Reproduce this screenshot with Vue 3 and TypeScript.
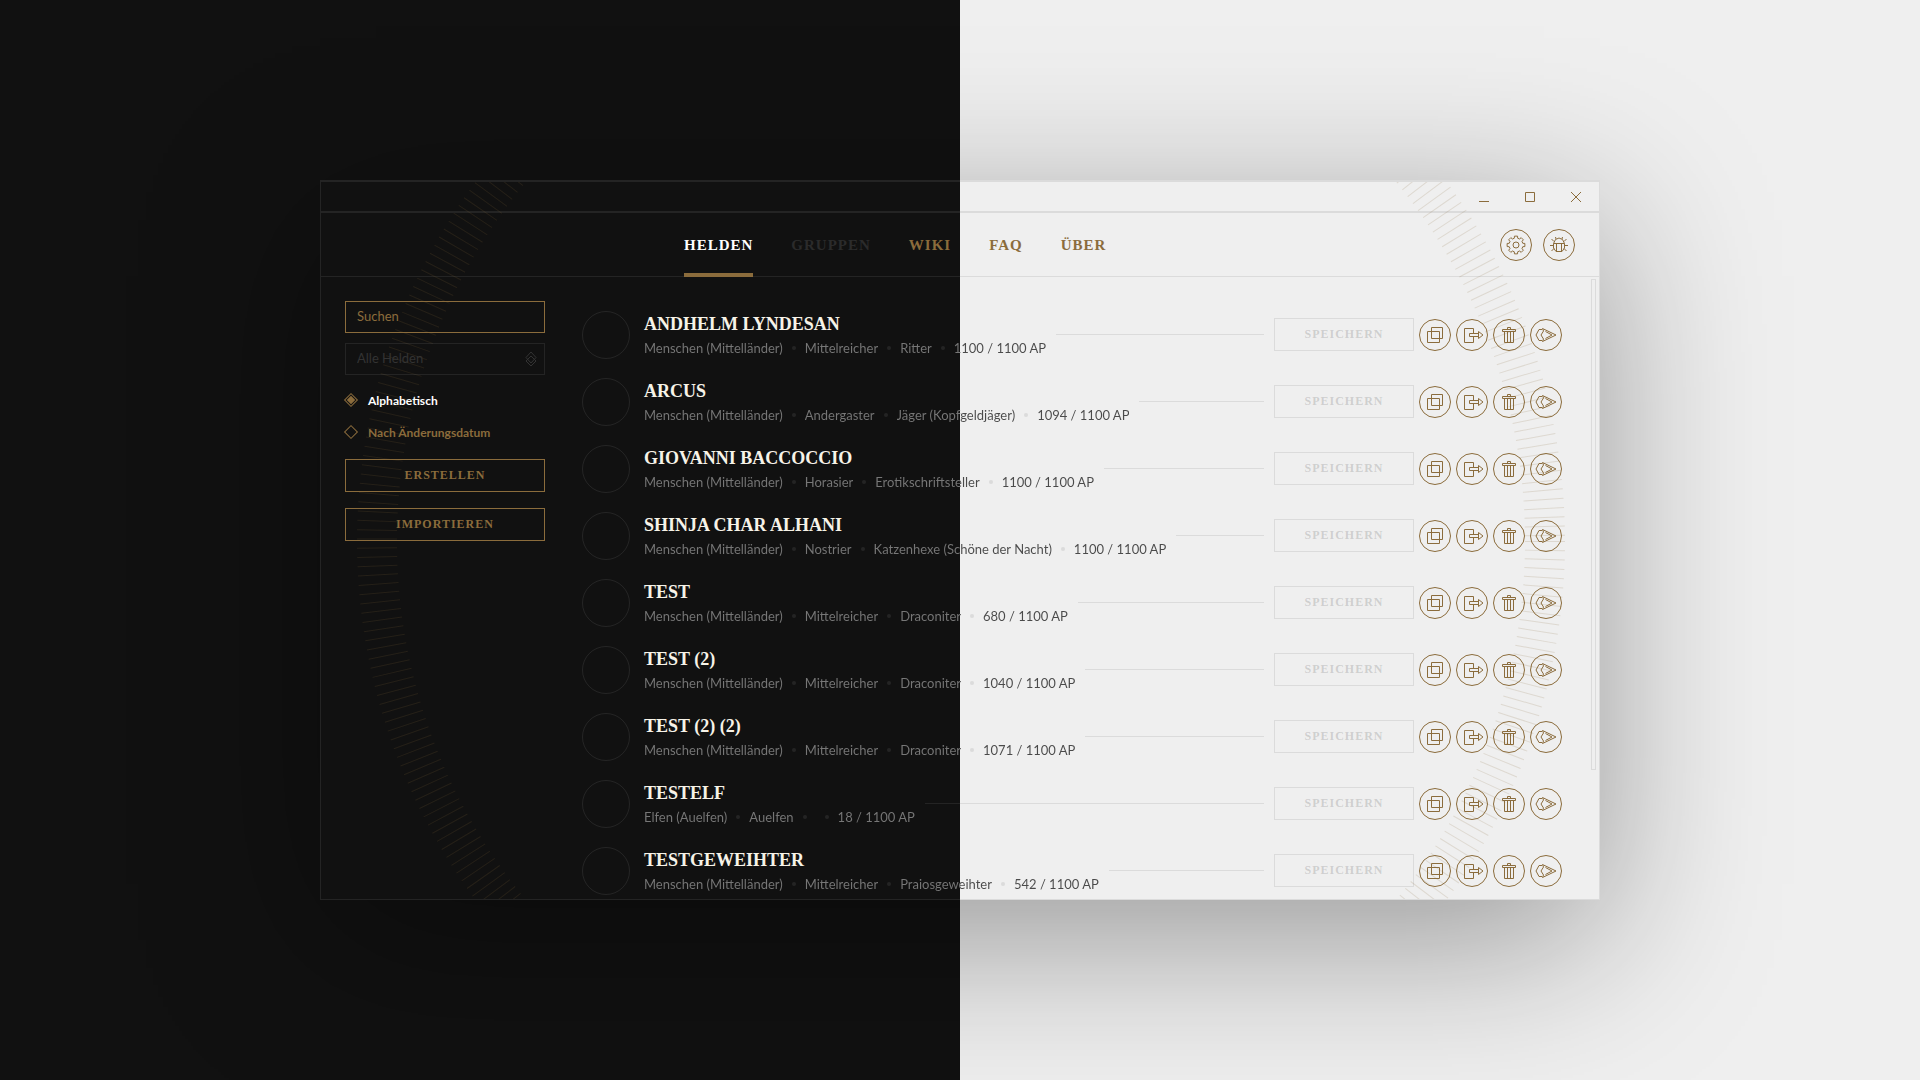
<script setup lang="ts">
import { computed, ref } from 'vue'

interface Hero {
  name: string
  race: string
  culture: string
  profession: string
  spent: number
}

const heroes: Hero[] = [
  { name: 'Andhelm Lyndesan', race: 'Menschen (Mittelländer)', culture: 'Mittelreicher', profession: 'Ritter', spent: 1100 },
  { name: 'Arcus', race: 'Menschen (Mittelländer)', culture: 'Andergaster', profession: 'Jäger (Kopfgeldjäger)', spent: 1094 },
  { name: 'Giovanni Baccoccio', race: 'Menschen (Mittelländer)', culture: 'Horasier', profession: 'Erotikschriftsteller', spent: 1100 },
  { name: 'Shinja char Alhani', race: 'Menschen (Mittelländer)', culture: 'Nostrier', profession: 'Katzenhexe (Schöne der Nacht)', spent: 1100 },
  { name: 'Test', race: 'Menschen (Mittelländer)', culture: 'Mittelreicher', profession: 'Draconiter', spent: 680 },
  { name: 'Test (2)', race: 'Menschen (Mittelländer)', culture: 'Mittelreicher', profession: 'Draconiter', spent: 1040 },
  { name: 'Test (2) (2)', race: 'Menschen (Mittelländer)', culture: 'Mittelreicher', profession: 'Draconiter', spent: 1071 },
  { name: 'Testelf', race: 'Elfen (Auelfen)', culture: 'Auelfen', profession: '', spent: 18 },
  { name: 'Testgeweihter', race: 'Menschen (Mittelländer)', culture: 'Mittelreicher', profession: 'Praiosgeweihter', spent: 542 },
]

const tabs = [
  { label: 'Helden', state: 'active' },
  { label: 'Gruppen', state: 'disabled' },
  { label: 'Wiki', state: '' },
  { label: 'FAQ', state: '' },
  { label: 'Über', state: '' },
]

const actions = [
  { label: 'Duplizieren', path: 'M8.5 12.5H20.5V23.5H8.5ZM12.5 8.5H23.5V19.5H12.5Z' },
  { label: 'Exportieren', path: 'M17.5 14.5V9.5H8.5V23.5H17.5V17.5M13.5 14.5H22.5V17.5H13.5ZM22.5 12.5L27 16L22.5 19.5Z' },
  { label: 'Löschen', path: 'M9.5 10.5H22.5V12.5H9.5ZM14.5 10.5V8.5H17.5V10.5M11.5 12.5V23.5H20.5V12.5M14.5 12.5V23.5M17.5 12.5V23.5' },
  { label: 'Öffnen', path: 'M12 10.5H9L6 16L9 21.5H12M12.5 9.5L26 16L12.5 22.5L13.5 20L11 16L13.5 12ZM15.5 12.500L22 16L15.500 19.500' },
]

const order = ref('name')
const query = ref('')

// Cog outline: eight blunt teeth around the centre of a 32px button
const cog = computed(() => {
  const points: string[] = []
  for (let i = 0; i < 8; i++) {
    const steps: [number, number][] = [[7, -14], [9, -10], [9, 10], [7, 14]]
    for (const [radius, offset] of steps) {
      const a = ((i * 45 + offset) * Math.PI) / 180
      points.push(`${(16 + radius * Math.cos(a)).toFixed(2)},${(16 + radius * Math.sin(a)).toFixed(2)}`)
    }
  }
  return points.join(' ')
})
</script>

<template>
  <div class="stage">
    <div class="window">
      <svg class="rays" width="1280" height="720" viewBox="0 0 1280 720" aria-hidden="true">
        <circle cx="641" cy="360" r="584" />
      </svg>

      <div class="titlebar">
        <button type="button" aria-label="Minimieren">
          <svg width="12" height="12"><path d="M1 10.5H11" /></svg>
        </button>
        <button type="button" aria-label="Maximieren">
          <svg width="12" height="12"><path d="M1.5 1.5H10.5V10.5H1.5Z" /></svg>
        </button>
        <button type="button" aria-label="Schließen">
          <svg width="12" height="12"><path d="M1 1L11 11M11 1L1 11" /></svg>
        </button>
      </div>

      <header class="header">
        <nav class="tabs">
          <a v-for="tab in tabs" :key="tab.label" href="#" :class="['tab', tab.state]">{{ tab.label }}</a>
        </nav>
        <div class="tools">
          <button type="button" class="round" aria-label="Einstellungen">
            <svg width="32" height="32"><polygon :points="cog" /><circle cx="16" cy="16" r="3" /></svg>
          </button>
          <button type="button" class="round" aria-label="Fehler melden">
            <svg width="32" height="32">
              <path d="M10.5 14.5H21.5V19L19 22.5H13L10.5 19ZM10.500 14.500L12.500 10.500L16 9L19.500 10.500L21.500 14.500M13.5 14.5V22.500M18.5 14.5V22.500M11 12.500L8.500 10M21 12.500L23.500 10M10.500 16.500H7M21.500 16.500H25M11 19.500L8.500 22M21 19.500L23.500 22M13 10L12.500 8M19 10L19.500 8" />
            </svg>
          </button>
        </div>
      </header>

      <div class="body">
        <aside class="sidebar">
          <input v-model="query" class="field" type="text" placeholder="Suchen" aria-label="Suchen" />
          <div class="dropdown">
            <select class="field" disabled aria-label="Heldenfilter">
              <option>Alle Helden</option>
            </select>
            <svg width="12" height="16"><path d="M6 1L11 6.500L6 12L1 6.500ZM6 5L11 10L6 15L1 10Z" /></svg>
          </div>
          <div class="orders">
            <label class="order"><input v-model="order" type="radio" name="order" value="name" /><span>Alphabetisch</span></label>
            <label class="order"><input v-model="order" type="radio" name="order" value="date" /><span>Nach Änderungsdatum</span></label>
          </div>
          <button type="button" class="push">Erstellen</button>
          <button type="button" class="push">Importieren</button>
        </aside>

        <main class="heroes">
          <article v-for="hero in heroes" :key="hero.name" class="hero">
            <div class="avatar"></div>
            <div class="info">
              <h2>{{ hero.name }}</h2>
              <p>
                <span>{{ hero.race }}</span><i></i><span>{{ hero.culture }}</span><i></i><span>{{ hero.profession }}</span><i></i><span>{{ hero.spent }} / 1100 AP</span>
              </p>
            </div>
            <div class="rule"></div>
            <button type="button" class="push save" disabled>Speichern</button>
            <div class="actions">
              <button v-for="action in actions" :key="action.label" type="button" class="round" :aria-label="action.label">
                <svg width="32" height="32"><path :d="action.path" /></svg>
              </button>
            </div>
          </article>
        </main>
        <div class="scrollbar"></div>
      </div>
    </div>
  </div>
</template>

<style>
body {
  margin: 0;
}
</style>

<style scoped>
.stage {
  --gold: #8b6c3c;
  --line: rgba(128, 128, 128, 0.18);
  --muted: rgba(128, 128, 128, 0.3);
  display: flex;
  align-items: center;
  justify-content: center;
  min-height: 100vh;
  overflow: hidden;
  background: linear-gradient(90deg, #111 50%, #efefef 50%);
  font-family: Lato, "Open Sans", sans-serif;
}

.stage *,
.stage *::before {
  box-sizing: border-box;
}

.window {
  position: relative;
  display: flex;
  flex-direction: column;
  width: calc(200% / 3);
  height: calc(200vh / 3);
  overflow: hidden;
  border: 1px solid var(--line);
  border-top-width: 2px;
  box-shadow: 0 40px 160px rgba(0, 0, 0, 0.37);
}

.rays {
  position: absolute;
  top: 50%;
  left: 50%;
  transform: translate(-50%, -50%);
  pointer-events: none;
}

.rays circle {
  fill: none;
  stroke: var(--gold);
  stroke-width: 40;
  stroke-dasharray: 1 8;
  opacity: 0.17;
}

button {
  padding: 0;
  border: 0;
  background: none;
  color: var(--gold);
}

svg {
  display: block;
  fill: none;
  stroke: currentColor;
}

.titlebar {
  display: flex;
  flex: none;
  justify-content: flex-end;
  height: 31px;
  border-bottom: 2px solid var(--line);
}

.titlebar button {
  display: grid;
  place-items: center;
  width: 46px;
}

.header {
  display: flex;
  flex: none;
  align-items: stretch;
  justify-content: space-between;
  height: 64px;
  padding: 0 24px 0 363px;
  border-bottom: 1px solid var(--line);
}

.tabs {
  display: flex;
  gap: 38px;
}

.tab {
  position: relative;
  color: var(--gold);
  font: bold 15px/64px "Liberation Serif", serif;
  letter-spacing: 1px;
  text-decoration: none;
  text-transform: uppercase;
}

.tab.active {
  color: #fff;
}

.tab.active::after {
  position: absolute;
  right: 0;
  bottom: -1px;
  left: 0;
  height: 4px;
  background: var(--gold);
  content: "";
}

.tab.disabled {
  color: #2b2b2b;
}

.tools {
  display: flex;
  align-items: center;
  gap: 11px;
}

.round {
  flex: none;
  width: 32px;
  height: 32px;
  border: 1px solid var(--gold);
  border-radius: 50%;
}

.round svg {
  margin: -1px;
}

.body {
  display: flex;
  flex: 1;
  min-height: 0;
}

.sidebar {
  display: flex;
  flex: none;
  flex-direction: column;
  width: 224px;
  padding: 24px 0 0 24px;
}

.field {
  display: block;
  width: 100%;
  height: 32px;
  padding: 0 11px 2px;
  border: 1px solid var(--gold);
  border-radius: 0;
  outline: 0;
  appearance: none;
  background: none;
  color: var(--gold);
  font: 13px Lato, sans-serif;
}

.field::placeholder {
  color: var(--gold);
  opacity: 1;
}

.field:disabled {
  border-color: var(--line);
  color: #333;
  opacity: 1;
}

.dropdown {
  position: relative;
  margin-top: 10px;
  color: #333;
}

.dropdown svg {
  position: absolute;
  top: 8px;
  right: 8px;
}

.orders {
  display: flex;
  flex-direction: column;
  margin: 9px 0 11px;
}

.order {
  display: flex;
  align-items: center;
  gap: 12px;
  height: 32px;
  padding-left: 1px;
  color: var(--gold);
  font-size: 12px;
  font-weight: bold;
}

.order input {
  display: grid;
  place-items: center;
  width: 10px;
  height: 10px;
  margin: 0;
  border: 1px solid var(--gold);
  appearance: none;
  transform: rotate(45deg);
}

.order input:checked::before {
  width: 6px;
  height: 6px;
  background: var(--gold);
  content: "";
}

.order:has(:checked) {
  color: #fff;
}

.push {
  height: 33px;
  border: 1px solid var(--gold);
  font: bold 12px "Liberation Serif", serif;
  letter-spacing: 1px;
  text-transform: uppercase;
}

.push + .push {
  margin-top: 16px;
}

.heroes {
  flex: 1;
  min-width: 0;
  padding: 24px 29px 0 37px;
  overflow: hidden;
}

.hero {
  display: flex;
  align-items: center;
  height: 67px;
}

.avatar {
  flex: none;
  width: 48px;
  height: 48px;
  margin-right: 14px;
  border: 1px solid var(--line);
  border-radius: 50%;
}

.info {
  padding-top: 2px;
}

h2 {
  margin: 0;
  color: #f7f3e8;
  font: bold 18px/24px "Liberation Serif", serif;
  text-transform: uppercase;
}

p {
  display: flex;
  align-items: center;
  margin: 0;
  font-size: 13px;
  line-height: 24px;
  white-space: nowrap;
}

/* The text colour flips where the backdrop does */
p span {
  background: linear-gradient(90deg, #777 50%, #4a4a4a 50%) fixed;
  background-clip: text;
  color: transparent;
}

p i {
  width: 4px;
  height: 4px;
  margin: 0 9px;
  border-radius: 50%;
  background: var(--line);
}

.rule {
  flex: 1;
  height: 1px;
  margin: 0 10px;
  background: var(--line);
}

.save {
  flex: none;
  width: 140px;
  border-color: var(--line);
  color: var(--muted);
}

.actions {
  display: flex;
  gap: 5px;
  margin-left: 5px;
}

.scrollbar {
  flex: none;
  width: 5px;
  height: 79%;
  margin: 2px 3px 0 0;
  border: 1px solid var(--line);
}
</style>
